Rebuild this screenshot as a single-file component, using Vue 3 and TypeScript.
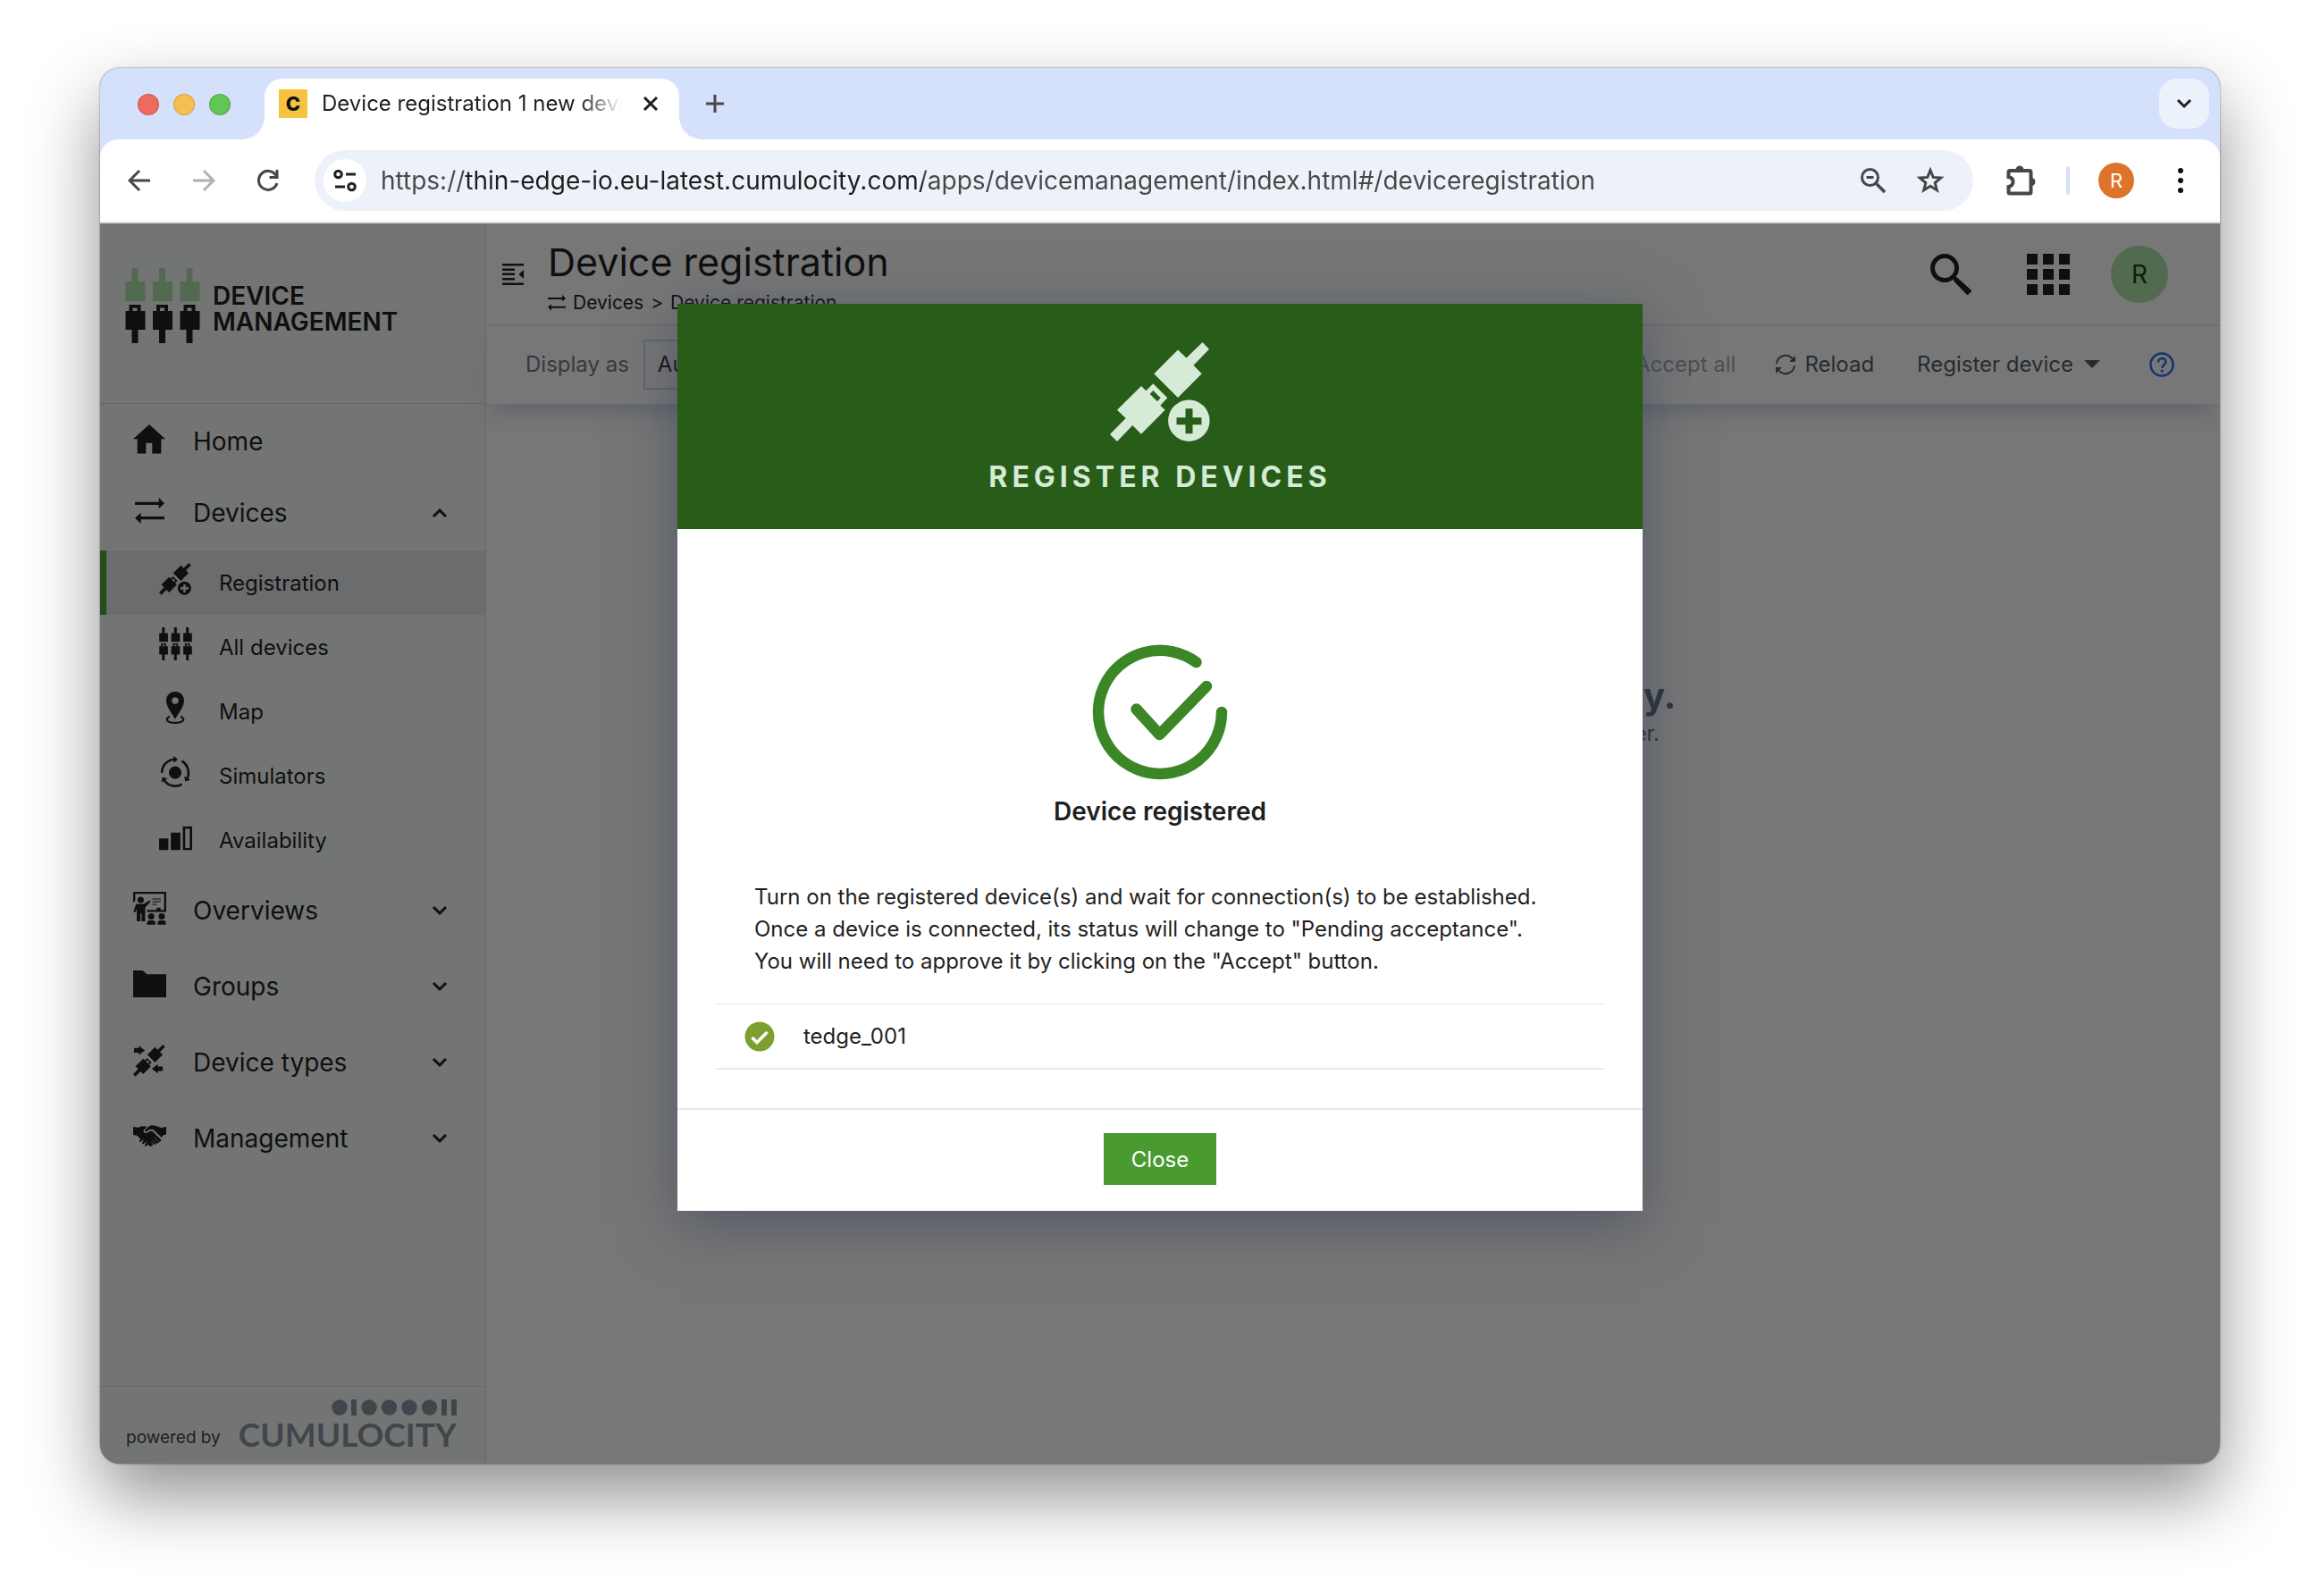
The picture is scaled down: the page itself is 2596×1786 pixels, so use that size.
<script setup lang="ts">
import { ref } from 'vue'

interface NavItem {
  label: string
  icon: string
  box: string
  width: number
  open?: boolean
  expandable?: boolean
  children?: NavItem[]
  active?: boolean
}

const url = ref('https://thin-edge-io.eu-latest.cumulocity.com/apps/devicemanagement/index.html#/deviceregistration')
const display = ref('Auto')
const dialogOpen = ref(true)

const nav: NavItem[] = [
  { label: 'Home', icon: 'i-home', box: '0 0 108 98', width: 36 },
  {
    label: 'Devices', icon: 'i-swap', box: '0 0 99 88', width: 33, expandable: true, open: true,
    children: [
      { label: 'Registration', icon: 'i-register', box: '0 0 112 112', width: 36, active: true },
      { label: 'All devices', icon: 'i-devices', box: '0 0 84 84', width: 37 },
      { label: 'Map', icon: 'i-pin', box: '0 0 66 108', width: 22 },
      { label: 'Simulators', icon: 'i-simulator', box: '-55 -57 110 112', width: 36 },
      { label: 'Availability', icon: 'i-bars', box: '0 -14 110 94', width: 37 },
    ],
  },
  { label: 'Overviews', icon: 'i-board', box: '0 0 110 110', width: 37, expandable: true },
  { label: 'Groups', icon: 'i-folder', box: '0 0 110 90', width: 37, expandable: true },
  { label: 'Device types', icon: 'i-types', box: '0 0 112 112', width: 36, expandable: true },
  { label: 'Management', icon: 'i-hands', box: '0 0 110 72', width: 37, expandable: true },
]
const tiles = [0, 1, 2, 3, 4, 5, 6, 7, 8]
</script>

<template>
  <div class="desktop">
    <svg class="defs" aria-hidden="true">
      <symbol id="i-home" viewBox="0 0 108 98"><path d="M54 0L108 49H94V98H64V62H43V98H14V49H0z" /></symbol>
      <symbol id="i-swap" viewBox="0 0 99 88"><path d="M0 14H80V0L99 19L80 37V24H0zM99 63H20V50L0 68L20 87V73H99z" /></symbol>
      <symbol id="plugs" viewBox="0 0 112 112">
        <path d="M76 8.500L85.500 17.500L103.500 0L111 7.700L93.500 25.700L102.700 35.300L76 62L49.300 35.300z" />
        <path fill-rule="evenodd" d="M35 49L40.300 54.300L48.300 46.300L64.300 62.300L56.300 70.700L61.700 75.700L35 102.700L25.300 93L8 111L0 103L17.700 85L8 75.700zM48.300 54L56.700 62.300L53 66.300L44.700 58z" />
      </symbol>
      <symbol id="i-register" viewBox="0 0 112 112">
        <use href="#plugs" width="112" height="112" />
        <path fill-rule="evenodd" d="M88.300 64.500a23.200 23.200 0 1 0 .1 0zM84.500 74.300h8v10h10v8h-10v10h-8v-10h-10v-8h10z" />
      </symbol>
      <symbol id="i-types" viewBox="0 0 112 112">
        <use href="#plugs" width="112" height="112" />
        <path d="M3 12H20V4L41 20L20 36V28H3zM103 76H86V68L65 84L86 100V92H103z" />
      </symbol>
      <symbol id="plug-tops" viewBox="0 0 84 84">
        <path d="M7.500 0h7v15h8v22h-22v-22h7zM38 0h7v15h8v22h-22v-22h7zM68.500 0h7v15h8v22h-22v-22h7z" />
      </symbol>
      <symbol id="plug-bottoms" viewBox="0 0 84 84">
        <path fill-rule="evenodd" d="M4.500 41h13v7h5v21h-8v15h-7v-15h-7v-21h4zM8.500 44.500v3.500h5v-3.500zM35 41h13v7h5v21h-8v15h-7v-15h-7v-21h4zM39 44.500v3.500h5v-3.500zM65.500 41h13v7h5v21h-8v15h-7v-15h-7v-21h4zM69.500 44.500v3.500h5v-3.500z" />
      </symbol>
      <symbol id="i-devices" viewBox="0 0 84 84">
        <use href="#plug-tops" width="84" height="84" /><use href="#plug-bottoms" width="84" height="84" />
      </symbol>
      <symbol id="i-pin" viewBox="0 0 66 108">
        <path fill-rule="evenodd" d="M33 0C16 0 3 13 3 30C3 50 20 70 33 92C46 70 63 50 63 30C63 13 50 0 33 0zM33 18.500a11.500 11.500 0 1 1-.1 0z" />
        <path d="M15 83C-4 92 6 104.500 33 104.500C60 104.500 70 92 51 83" fill="none" stroke="currentColor" stroke-width="6.500" />
      </symbol>
      <symbol id="i-simulator" viewBox="-55 -57 110 112">
        <circle r="21.500" />
        <g v-for="a in [0, 120, 240]" :key="a" :transform="`rotate(${a})`">
          <path d="M-45.500 0A45.500 45.500 0 0 1 0 -45.500" fill="none" stroke="currentColor" stroke-width="8" />
          <path d="M-5 -58L9 -45L-5 -33z" />
        </g>
      </symbol>
      <symbol id="i-bars" viewBox="0 -14 110 94">
        <path fill-rule="evenodd" d="M0 40H31V80H0zM39 21H71V80H39zM79 0H110V80H79zM87 8V72H102V8z" />
      </symbol>
      <symbol id="i-board" viewBox="0 0 110 110">
        <path d="M0 36V0H110V67H46V60H78V53H91V60H103V7H7V30z" />
        <circle cx="25" cy="27" r="10.500" />
        <path d="M10 40H36L54 28L58 33L40 52V98H28V72H24V98H12V58L8 68L1 66z" />
        <path d="M64 22H92V25H64zM64 31H92V34H64zM64 40H78V43H64z" />
        <circle cx="60" cy="82" r="10.500" /><circle cx="95" cy="82" r="10.500" />
        <path d="M46 109V103Q46 96 54 95H66Q74 96 74 103V109zM81 109V103Q81 96 89 95H101Q109 96 109 103V109z" />
      </symbol>
      <symbol id="i-folder" viewBox="0 0 110 90"><path d="M0 0H32L46 13H110V90H0z" /></symbol>
      <symbol id="i-hands" viewBox="0 0 110 72">
        <path d="M0 6L17 8Q30 2 46 5L35 17Q32 25 40 27Q49 27 56 20L63 20L93 49Q94 56 87 56Q85 62 78 60Q76 67 69 64L55 52L66 64Q64 73 55 70L22 44L13 35L0 33z" />
        <path d="M110 6L92 9Q74 0 61 1Q52 2 40 16Q38 21 42 22Q48 21 55 14L66 14L95 42L99 34L110 31z" />
        <path d="M24 53L31 45M33 60L41 51M42 67L50 57" stroke="currentColor" stroke-width="7" stroke-linecap="round" />
        <path d="M28 56L36 48M38 63L46 54M63 50L75 61M70 42L84 55" stroke="#737574" stroke-width="2" />
      </symbol>
      <symbol id="chev-down" viewBox="0 0 18 12"><path d="M2 2L9 9L16 2" fill="none" stroke="currentColor" stroke-width="3" /></symbol>
      <symbol id="chev-up" viewBox="0 0 18 12"><path d="M2 10L9 3L16 10" fill="none" stroke="currentColor" stroke-width="3" /></symbol>
    </svg>

    <div class="window">
      <div class="tabstrip">
        <div class="lights"><i class="red"></i><i class="amber"></i><i class="lime"></i></div>
        <div class="tab">
          <span class="favicon">C</span>
          <span class="tab-title">Device registration 1 new devi</span>
          <button class="plain" aria-label="Close tab">
            <svg width="18" height="18" viewBox="0 0 18 18"><path d="M2 2L16 16M16 2L2 16" stroke="#1f1f1f" stroke-width="3" /></svg>
          </button>
        </div>
        <button class="plain new-tab" aria-label="New tab">
          <svg width="22" height="22" viewBox="0 0 22 22"><path d="M11 1V21M1 11H21" stroke="#474747" stroke-width="3" /></svg>
        </button>
        <button class="tab-search" aria-label="Search tabs">
          <svg width="18" height="12" viewBox="0 0 18 12"><path d="M2 2L9 9L16 2" fill="none" stroke="#1f1f1f" stroke-width="3" /></svg>
        </button>
      </div>

      <div class="toolbar">
        <button class="plain tool" aria-label="Back">
          <svg width="26" height="26" viewBox="0 0 26 26"><path d="M25 13H3M13 2L2 13L13 24" fill="none" stroke="#474747" stroke-width="3" /></svg>
        </button>
        <button class="plain tool" aria-label="Forward">
          <svg width="26" height="26" viewBox="0 0 26 26"><path d="M1 13H23M13 2L24 13L13 24" fill="none" stroke="#b0b0b0" stroke-width="3" /></svg>
        </button>
        <button class="plain tool" aria-label="Reload page">
          <svg width="26" height="26" viewBox="0 0 26 26"><path d="M23 16A10.500 10.500 0 1 1 22 7.500" fill="none" stroke="#474747" stroke-width="3" /><path d="M24.500 1V11H14.500V8H21.500V1z" fill="#474747" /></svg>
        </button>
        <div class="omnibox">
          <button class="site" aria-label="View site information">
            <svg width="26" height="26" viewBox="0 0 26 26" fill="none" stroke="#1f1f1f" stroke-width="3"><circle cx="5.500" cy="6" r="3.800" /><path d="M14 6H25M2 20H13" /><circle cx="20.500" cy="20" r="3.800" /></svg>
          </button>
          <input v-model="url" class="address" type="text" aria-label="Address" />
          <button class="plain omni-btn" aria-label="Zoom">
            <svg width="30" height="30" viewBox="0 0 30 30" fill="none" stroke="#474747"><circle cx="11.500" cy="11.500" r="9" stroke-width="3" /><path d="M18 18L28 28" stroke-width="3.500" /><path d="M7.500 11.500H15.500" stroke-width="3" /></svg>
          </button>
          <button class="plain omni-btn" aria-label="Bookmark">
            <svg width="32" height="32" viewBox="0 0 32 32"><path d="M16 4.500L19.200 12.400L27.800 13L21.200 18.500L23.300 26.800L16 22.300L8.700 26.800L10.800 18.500L4.200 13L12.800 12.400z" fill="none" stroke="#474747" stroke-width="3" /></svg>
          </button>
        </div>
        <button class="plain ext" aria-label="Extensions">
          <svg width="34" height="34" viewBox="0 0 34 34"><path d="M3.500 7.500Q3.500 6 5 6H27Q28.500 6 28.500 7.500V30Q28.500 31.500 27 31.500H5Q3.500 31.500 3.500 30V24Q8.500 23 8.500 18.500Q8.500 14 3.500 13z" fill="none" stroke="#474747" stroke-width="4" /><path d="M11.500 5a4.500 4.500 0 0 1 9 0zM29 14a4.500 4.500 0 0 1 0 9z" fill="#474747" /></svg>
        </button>
        <i class="divider"></i>
        <button class="profile" aria-label="Profile">R</button>
        <button class="plain kebab" aria-label="Browser menu">
          <svg width="8" height="30" viewBox="0 0 8 30" fill="#474747"><circle cx="4" cy="4" r="3" /><circle cx="4" cy="15" r="3" /><circle cx="4" cy="26" r="3" /></svg>
        </button>
      </div>

      <div class="app">
        <aside class="sidebar">
          <div class="brand">
            <svg width="84" height="84" viewBox="0 0 84 84">
              <use href="#plug-tops" width="84" height="84" fill="#526a4f" /><use href="#plug-bottoms" width="84" height="84" fill="#0f0f0f" />
            </svg>
            <span class="brand-name">DEVICE<br />MANAGEMENT</span>
          </div>
          <nav class="nav">
            <template v-for="item in nav" :key="item.label">
              <a href="#" class="row" :class="{ first: !item.expandable }">
                <span class="icon"><svg :viewBox="item.box" :style="{ width: item.width + 'px' }"><use :href="'#' + item.icon" :x="item.box.split(' ')[0]" :y="item.box.split(' ')[1]" :width="item.box.split(' ')[2]" :height="item.box.split(' ')[3]" /></svg></span>
                <span class="label">{{ item.label }}</span>
                <svg v-if="item.expandable" class="chev" viewBox="0 0 18 12"><use :href="item.open ? '#chev-up' : '#chev-down'" /></svg>
              </a>
              <a v-for="sub in item.children" :key="sub.label" href="#" class="row sub" :class="{ active: sub.active }">
                <span class="icon"><svg :viewBox="sub.box" :style="{ width: sub.width + 'px' }"><use :href="'#' + sub.icon" :x="sub.box.split(' ')[0]" :y="sub.box.split(' ')[1]" :width="sub.box.split(' ')[2]" :height="sub.box.split(' ')[3]" /></svg></span>
                <span class="label">{{ sub.label }}</span>
              </a>
            </template>
          </nav>
          <div class="powered">
            <span class="by">powered by</span>
            <span class="vendor">
              <svg width="140" height="18" viewBox="0 0 140 18">
                <circle cx="9" cy="9" r="8.700" /><rect x="22" width="6" height="18" /><circle cx="42" cy="9" r="8.700" /><circle cx="64.500" cy="9" r="8.700" /><circle cx="87" cy="9" r="8.700" /><circle cx="109.500" cy="9" r="8.700" /><rect x="123" width="6" height="18" /><rect x="134" width="6" height="18" />
              </svg>
              <span class="wordmark">CUMULOCITY</span>
            </span>
          </div>
        </aside>

        <main class="main">
          <header class="head">
            <button class="plain collapse" aria-label="Toggle navigation">
              <svg width="24" height="24" viewBox="0 0 24 24"><path d="M0 0H24V2.500H0zM0 5.500H14V8H0zM0 10.500H14V13H0zM0 16H14V18.500H0zM0 21.500H24V24H0zM24 7V17L18.500 12z" /></svg>
            </button>
            <div class="heading">
              <h1>Device registration</h1>
              <div class="crumbs">
                <svg width="20" height="18" viewBox="0 0 99 88"><use href="#i-swap" /></svg>
                <a href="#">Devices</a><span>&gt;</span><a href="#">Device registration</a>
              </div>
            </div>
            <button class="plain search" aria-label="Search">
              <svg width="46" height="46" viewBox="0 0 46 46"><circle cx="16" cy="16" r="13.500" fill="none" stroke="#0f0f0f" stroke-width="5" /><path d="M25.500 25.500L30 27L46 41.500L41.500 46L27 31z" stroke="#0f0f0f" stroke-width="1" /></svg>
            </button>
            <button class="plain apps" aria-label="Applications">
              <i v-for="t in tiles" :key="t"></i>
            </button>
            <button class="avatar" aria-label="User menu">R</button>
          </header>

          <div class="actions">
            <label for="display-as">Display as</label>
            <select id="display-as" v-model="display"><option>Auto</option><option>List</option><option>Grid</option></select>
            <div class="right">
              <button class="plain muted" disabled>Accept all</button>
              <button class="plain reload">
                <svg width="24" height="24" viewBox="0 0 24 24" fill="none" stroke="#272b30" stroke-width="2"><path d="M2 11A10 10 0 0 1 20 6M22 13A10 10 0 0 1 4 18" /><path d="M23 2V9H16zM1 22V15H8z" fill="#272b30" stroke="none" /></svg>
                Reload
              </button>
              <button class="plain register">Register device<i class="caret"></i></button>
              <button class="plain" aria-label="Help">
                <svg width="28" height="28" viewBox="0 0 28 28" fill="none" stroke="#15346f"><circle cx="14" cy="14" r="12.500" stroke-width="2.500" /><path d="M10 11.500C10 5.500 18.500 5.500 18.500 11C18.500 14 14.300 14 14.300 18" stroke-width="2.500" /><path d="M14.300 19.800V22.500" stroke-width="3" /></svg>
              </button>
            </div>
          </div>

          <section class="empty">
            <div>
              <h2>There are no devices to display.</h2>
              <p>Registered devices appear here later.</p>
            </div>
          </section>
        </main>

        <div v-if="dialogOpen" class="overlay">
          <div class="dialog" role="dialog" aria-labelledby="dialog-title">
            <div class="dialog-head">
              <svg width="112" height="112" viewBox="0 0 112 112"><use href="#i-register" /></svg>
              <h3 id="dialog-title">Register devices</h3>
            </div>
            <div class="dialog-body">
              <svg width="152" height="152" viewBox="0 0 152 152" fill="none" stroke="#3c8725" stroke-width="12.500" stroke-linecap="round" stroke-linejoin="round">
                <path d="M116.500 20A69 69 0 1 0 145 76" /><path d="M49.500 72.500L75.500 101L128 47" />
              </svg>
              <h4>Device registered</h4>
              <p>Turn on the registered device(s) and wait for connection(s) to be established.<br />Once a device is connected, its status will change to "Pending acceptance".<br />You will need to approve it by clicking on the "Accept" button.</p>
              <ul>
                <li>
                  <svg width="34" height="34" viewBox="0 0 34 34"><circle cx="17" cy="17" r="16.500" fill="#7ca030" /><path d="M8.500 18L14 23.500L25.500 12" fill="none" stroke="#fff" stroke-width="3.500" /></svg>
                  <span>tedge_001</span>
                </li>
              </ul>
            </div>
            <div class="dialog-foot"><button class="close" @click="dialogOpen = false">Close</button></div>
          </div>
        </div>
      </div>
    </div>
  </div>
</template>

<style>
body { background: #fff; }
</style>

<style scoped>
* { box-sizing: border-box; }
.desktop {
  min-height: 100vh;
  padding: 76px 112px 148px;
  display: flex;
  flex-direction: column;
  font-family: Inter, "Liberation Sans", sans-serif;
  font-size: 24px;
  color: #0f0f0f;
  overflow: hidden;
}
.defs { position: absolute; width: 0; height: 0; }
svg { display: block; fill: currentColor; flex: none; }
svg[fill="none"] { fill: none; }
h1, h2, h3, h4, p, ul { margin: 0; padding: 0; }
a { color: inherit; text-decoration: none; }
button, input, select { font: inherit; color: inherit; margin: 0; }
.plain { border: 0; background: none; padding: 0; display: flex; align-items: center; justify-content: center; }

.window {
  flex: 1;
  display: flex;
  flex-direction: column;
  border-radius: 22px;
  overflow: hidden;
  background: #d5e0fb;
  box-shadow: 0 0 2px rgba(0, 0, 0, .6), 0 36px 80px rgba(0, 0, 0, .44);
}

.tabstrip { height: 80px; display: flex; align-items: center; padding: 12px 12px 0 42px; }
.lights { display: flex; gap: 16px; margin: -10px 38px 0 0; }
.lights i { width: 24px; height: 24px; border-radius: 50%; border: 1px solid rgba(0, 0, 0, .15); }
.red { background: #ed6a5e; }
.amber { background: #f5bf4f; }
.lime { background: #62c554; }
.tab {
  width: 464px;
  height: 68px;
  position: relative;
  display: flex;
  align-items: center;
  padding: 0 23px 12px 16px;
  background: #fff;
  border-radius: 20px 20px 0 0;
}
.tab::before, .tab::after {
  content: "";
  position: absolute;
  bottom: 0;
  width: 24px;
  height: 24px;
}
.tab::before { left: -24px; background: radial-gradient(circle at 0 0, transparent 23px, #fff 24px); }
.tab::after { right: -24px; background: radial-gradient(circle at 100% 0, transparent 23px, #fff 24px); }
.favicon { width: 32px; height: 32px; background: #f5c242; font-weight: 800; font-size: 22px; line-height: 32px; text-align: center; }
.tab-title {
  flex: 1;
  margin-left: 16px;
  white-space: nowrap;
  line-height: 32px;
  color: #1f1f1f;
  mask-image: linear-gradient(90deg, #000 288px, transparent 336px);
}
.new-tab { margin: -12px auto 0 29px; }
.tab-search { width: 56px; height: 56px; border: 0; padding: 0; border-radius: 20px; background: #ebf2fc; margin-top: -12px; display: flex; align-items: center; justify-content: center; }

.toolbar {
  height: 94px;
  display: flex;
  align-items: center;
  padding: 0 40px 0 20px;
  background: #fff;
  border-radius: 20px 20px 0 0;
  border-bottom: 2px solid #dcdedd;
}
.tool { width: 48px; height: 48px; margin-right: 24px; }
.omnibox { flex: 1; height: 68px; display: flex; align-items: center; gap: 16px; margin-left: 4px; padding: 0 24px 0 10px; border-radius: 34px; background: #edf2fa; }
.site { width: 48px; height: 48px; border: 0; border-radius: 50%; padding: 0; background: #fff; display: flex; align-items: center; justify-content: center; }
.address {
  flex: 1;
  height: 40px;
  border: 0;
  outline: 0;
  padding: 0;
  font-size: 28px;
  -webkit-text-fill-color: transparent;
  background: linear-gradient(90deg, #474747 94px, #1f1f1f 94px, #1f1f1f 607px, #474747 607px);
  background-clip: text;
}
.omni-btn { width: 48px; height: 48px; }
.ext { margin-left: 36px; }
.divider { width: 4px; height: 32px; border-radius: 2px; background: #d5e0fb; margin: 0 32px 0 34px; }
.profile { width: 40px; height: 40px; border: 0; padding: 0; border-radius: 50%; background: #de732c; color: #fff; font-size: 22px; }
.kebab { margin-left: 48px; }

.app { flex: 1; display: flex; position: relative; background: #777; }
.sidebar { width: 432px; display: flex; flex-direction: column; background: #737574; border-right: 1px solid #676867; }
.brand { height: 202px; display: flex; align-items: center; gap: 14px; padding: 0 0 18px 28px; border-bottom: 1px solid #676867; }
.brand-name { font-size: 28px; line-height: 29px; font-weight: 600; padding-top: 8px; }
.nav { flex: 1; padding-top: 4px; }
.row { height: 85px; display: flex; align-items: center; padding: 0 42px 0 28px; font-size: 28px; }
.row.first { height: 75px; }
.icon { width: 54px; display: flex; justify-content: center; padding-bottom: 4px; }
.label { flex: 1; padding-left: 22px; }
.chev { width: 18px; height: 12px; }
.row.sub { height: 72px; padding-left: 57px; font-size: 24px; }
.sub .icon { padding-bottom: 8px; }
.row.active { background: #6b6c6e; border-left: 7px solid #234e17; padding-left: 50px; }
.powered { height: 87px; display: flex; align-items: flex-end; padding: 0 32px 12px 29px; border-top: 1px solid #676867; }
.by { font-size: 19px; line-height: 34px; color: #1f1f1f; }
.vendor { margin-left: auto; display: flex; flex-direction: column; align-items: flex-end; color: #42454b; }
.wordmark { font-family: Lato, sans-serif; font-size: 37px; line-height: 42px; font-weight: 700; }

.main { flex: 1; display: flex; flex-direction: column; min-width: 0; }
.head { height: 115px; display: flex; align-items: center; padding: 0 58px 0 18px; border-bottom: 2px solid #6e6f6f; }
.heading { margin-left: 27px; flex: 1; padding-top: 10px; }
h1 { font-size: 43px; line-height: 52px; font-weight: 400; }
.crumbs { display: flex; align-items: center; gap: 8px; font-size: 21px; line-height: 36px; margin-top: 2px; }
.apps { width: 48px; display: grid; grid-template-columns: repeat(3, 12px); gap: 5px; justify-content: space-between; margin: 0 46px 0 62px; }
.apps i { height: 12px; background: #0f0f0f; }
.avatar { width: 64px; height: 64px; border: 0; padding: 0; border-radius: 50%; background: #526a4f; color: #0d1f09; font-size: 28px; }
.actions { height: 87px; display: flex; align-items: center; padding: 0 51px 2px 44px; color: #34393f; box-shadow: 0 16px 24px -8px rgba(60, 70, 85, .4); }
select { appearance: none; width: 180px; height: 56px; margin-left: 16px; padding: 0 14px; border: 2px solid #62666b; border-radius: 0; background: none; color: #0f0f0f; }
.right { margin-left: auto; display: flex; align-items: center; color: #272b30; }
.muted { color: #4c4f52; }
.reload { gap: 9px; margin: 0 48px 0 44px; }
.register { margin-right: 55px; }
.caret { margin-left: 12px; border: 9px solid transparent; border-top-color: #272b30; border-bottom: 0; }
.empty { flex: 1; display: flex; padding: 299px 609px 0 0; justify-content: flex-end; color: #2a323a; }
h2 { font-size: 40px; line-height: 56px; font-weight: 700; }
.empty p { line-height: 28px; text-align: right; padding-right: 18px; }

.overlay { position: absolute; inset: 0; display: flex; justify-content: center; align-items: flex-start; padding-top: 90px; }
.dialog { width: 1080px; background: #fff; color: #1f1f1f; box-shadow: 0 14px 60px rgba(55, 65, 85, .6); }
.dialog-head { padding: 43px 0 36px; display: flex; flex-direction: column; align-items: center; gap: 17px; background: #285c19; color: #d6ebd6; }
h3 { font-size: 32px; line-height: 44px; font-weight: 700; letter-spacing: 5px; text-transform: uppercase; }
.dialog-body { padding: 129px 43px 43px; display: flex; flex-direction: column; align-items: center; border-bottom: 2px solid #e8e9ea; }
h4 { font-size: 28px; line-height: 36px; font-weight: 600; margin: 17px 0 60px; }
.dialog-body p { align-self: stretch; padding: 0 43px; line-height: 36px; margin-bottom: 29px; }
ul { align-self: stretch; list-style: none; }
li { height: 74px; display: flex; align-items: center; gap: 32px; padding-left: 32px; border: solid #e8e9ea; border-width: 1px 0 2px; }
.dialog-foot { padding: 26px 0 29px; display: flex; justify-content: center; }
.close { width: 126px; height: 58px; border: 0; padding: 0; background: #499b30; color: #fff; }
</style>
